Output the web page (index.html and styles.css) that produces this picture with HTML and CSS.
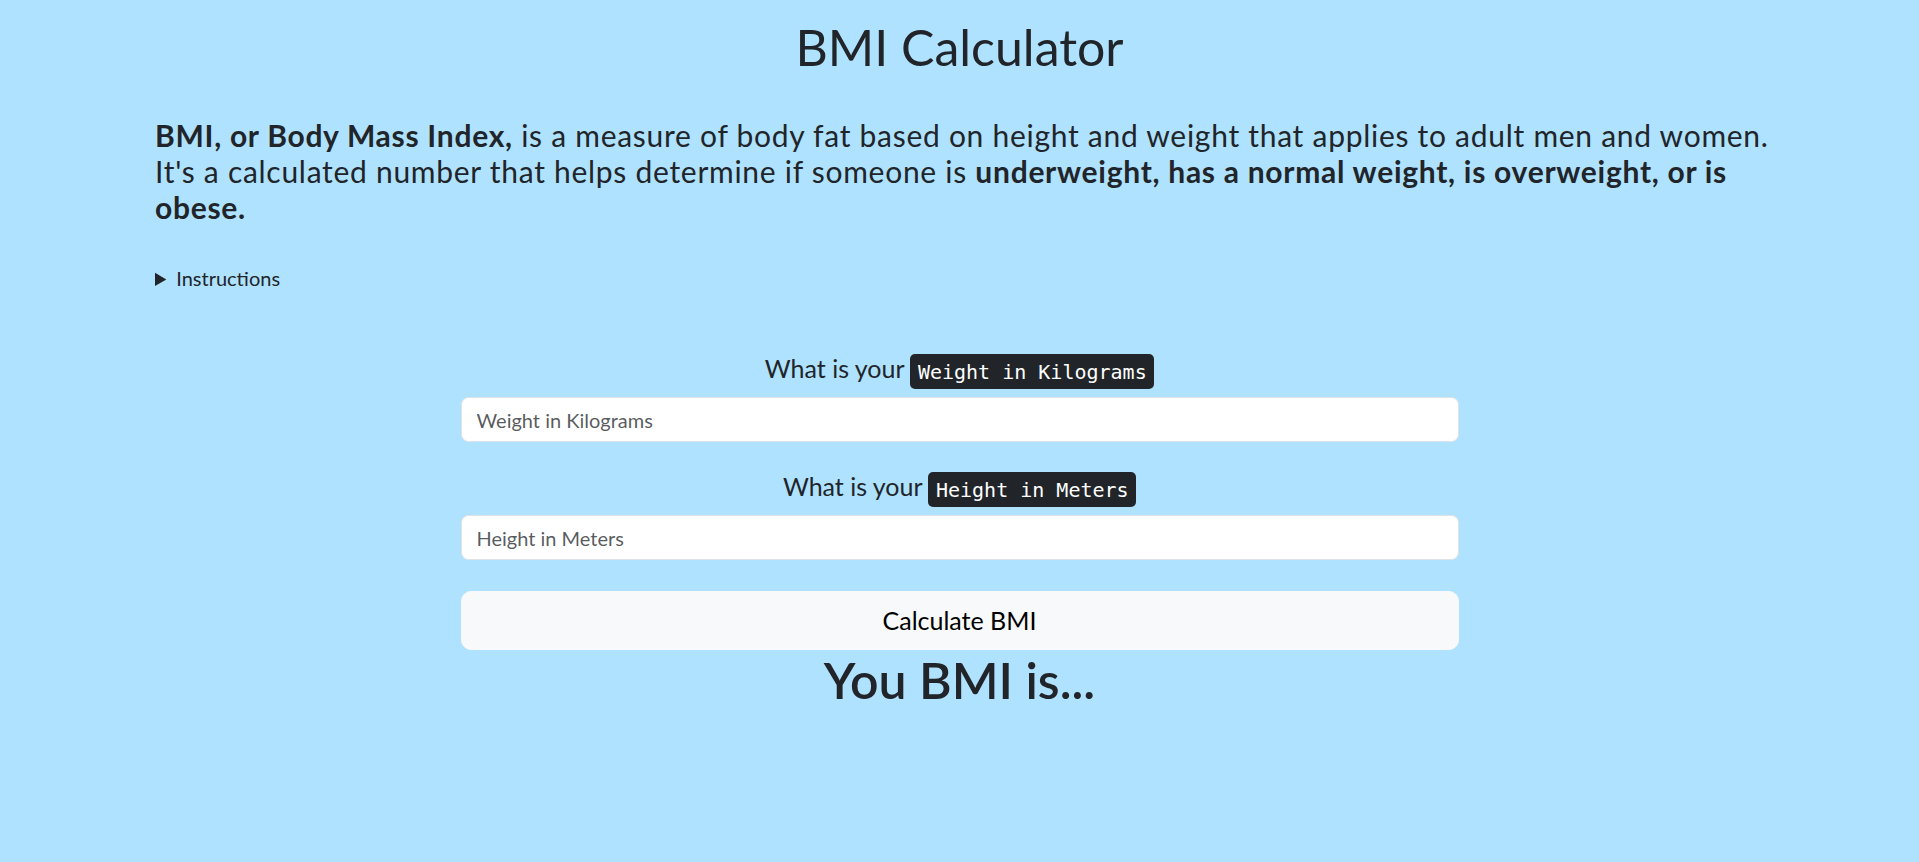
FILE: index.html
```html
<!DOCTYPE html>
<html lang="en">
<head>
<meta charset="utf-8">
<title>BMI Calculator</title>
<link rel="stylesheet" href="styles.css">
</head>
<body>
<main class="page">
  <h1 class="title">BMI Calculator</h1>
  <section class="intro">
    <p class="lead"><b>BMI, or Body Mass Index,</b> is a measure of body fat based on height and weight that applies to adult men and women. It's a calculated number that helps determine if someone is <b>underweight, has a normal weight, is overweight, or is obese.</b></p>
    <details class="instructions">
      <summary>Instructions</summary>
      <p>Enter your weight in kilograms and your height in meters, then press Calculate BMI.</p>
    </details>
  </section>
  <form class="calc">
    <label class="field-label" for="weight">What is your <kbd>Weight in Kilograms</kbd></label>
    <input class="field" id="weight" type="text" placeholder="Weight in Kilograms">
    <label class="field-label second" for="height">What is your <kbd>Height in Meters</kbd></label>
    <input class="field" id="height" type="text" placeholder="Height in Meters">
    <button class="btn" type="button">Calculate BMI</button>
    <h1 class="result">You BMI is...</h1>
  </form>
</main>
</body>
</html>
```
FILE: styles.css
```css
html, body {
  margin: 0;
  padding: 0;
}
body {
  background: #aee2ff;
  color: #212529;
  font-family: Lato, "Liberation Sans", sans-serif;
}
.page {
  padding-top: 17px;
}
.title {
  margin: 0;
  text-align: center;
  font-size: 50px;
  line-height: 60px;
  font-weight: 400;
}
.intro {
  margin: 0 120px 0 155px;
}
.lead {
  margin: 40px 0 0;
  font-size: 30px;
  line-height: 36px;
  letter-spacing: 0.72px;
}
.lead b {
  font-weight: 700;
}
.instructions {
  margin-top: 38px;
  font-size: 20px;
  line-height: 30px;
}
.instructions summary {
  cursor: pointer;
}
.calc {
  width: 998px;
  margin: 57px auto 0;
  display: flex;
  flex-direction: column;
}
.field-label {
  display: block;
  text-align: center;
  font-size: 25px;
  line-height: 37.5px;
  margin-bottom: 9.5px;
}
.field-label.second {
  margin-top: 26px;
}
kbd {
  font-family: "DejaVu Sans Mono", "Liberation Mono", monospace;
  font-size: 20px;
  line-height: 20px;
  padding: 5.5px 7.5px;
  color: #fff;
  background: #212529;
  border-radius: 5px;
}
.field {
  box-sizing: border-box;
  width: 100%;
  height: 45px;
  padding: 0 15px;
  font-family: Lato, "Liberation Sans", sans-serif;
  font-size: 20px;
  color: #212529;
  background: #fff;
  border: 1px solid #dee2e6;
  border-radius: 7.5px;
  outline: none;
}
.field::placeholder {
  color: rgba(33, 37, 41, 0.75);
}
.btn {
  margin-top: 31px;
  box-sizing: border-box;
  width: 100%;
  height: 59px;
  padding: 0 20px;
  font-family: Lato, "Liberation Sans", sans-serif;
  font-size: 25px;
  line-height: 37px;
  color: #000;
  background: #f8f9fa;
  border: 1px solid #f8f9fa;
  border-radius: 10px;
  cursor: pointer;
}
.result {
  margin: 0;
  text-align: center;
  font-size: 50px;
  line-height: 60px;
  font-weight: 600;
}
```
